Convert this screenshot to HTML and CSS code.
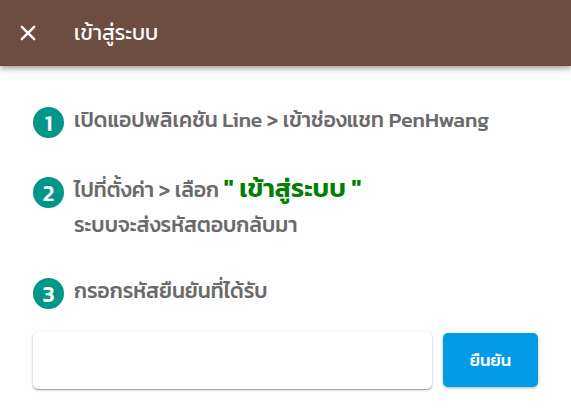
FILE: index.html
```html
<!DOCTYPE html>
<html lang="th">
<head>
<meta charset="utf-8">
<meta name="viewport" content="width=device-width, initial-scale=1">
<title>เข้าสู่ระบบ</title>
<link rel="stylesheet" href="styles.css">
</head>
<body>
<header class="toolbar">
  <button class="close" type="button" aria-label="ปิด">
    <svg viewBox="0 0 24 24" width="24" height="24" fill="none" stroke="currentColor" stroke-width="2.4" stroke-linecap="round"><path d="M5.8 5.8 18.2 18.2M18.2 5.8 5.8 18.2"/></svg>
  </button>
  <h1 class="title">เข้าสู่ระบบ</h1>
</header>
<main class="content">
  <ol class="steps">
    <li class="step"><span class="number">1</span><p class="text">เปิดแอปพลิเคชัน Line &gt; เข้าช่องแชท PenHwang</p></li>
    <li class="step"><span class="number">2</span><p class="text">ไปที่ตั้งค่า &gt; เลือก <strong class="highlight">" เข้าสู่ระบบ "</strong><br>ระบบจะส่งรหัสตอบกลับมา</p></li>
    <li class="step"><span class="number">3</span><label class="text" for="code">กรอกรหัสยืนยันที่ได้รับ</label></li>
  </ol>
  <form class="confirm">
    <input class="code" id="code" type="text">
    <button class="submit" type="button">ยืนยัน</button>
  </form>
</main>
</body>
</html>
```

FILE: styles.css
```css
* {
  box-sizing: border-box;
}

body {
  margin: 0;
  background: #fefefe;
  color: #6a6a6a;
  font-family: Kanit, "Noto Sans Thai", "Noto Sans", "Open Sans", sans-serif;
}

.toolbar {
  display: flex;
  align-items: center;
  gap: 34px;
  height: 66px;
  padding: 0 16px;
  background: #6d4c41;
  color: #fff;
  box-shadow: 0 2px 4px -1px rgba(0, 0, 0, .2), 0 4px 5px rgba(0, 0, 0, .14), 0 1px 10px rgba(0, 0, 0, .12);
}

.close {
  display: flex;
  padding: 0;
  border: 0;
  background: none;
  color: inherit;
}

.title {
  margin: 0;
  font-size: 21px;
  font-weight: 400;
  line-height: 32px;
}

.content {
  padding: 36px 33px;
}

.steps {
  display: grid;
  gap: 31px;
  margin: 0;
  padding: 0;
  list-style: none;
}

.step {
  display: flex;
  gap: 10px;
  min-height: 39px;
}

.number {
  flex: none;
  width: 31px;
  height: 31px;
  margin-top: 5px;
  border-radius: 50%;
  background: #009688;
  color: #fff;
  font-size: 23px;
  font-weight: 500;
  line-height: 32px;
  text-align: center;
}

.text {
  margin: 0;
  font-size: 21px;
  font-weight: 500;
  line-height: 35px;
}

.highlight {
  color: #008000;
  font-size: 26px;
  font-weight: 600;
  line-height: 26px;
}

.confirm {
  display: flex;
  gap: 11px;
  margin-top: 20px;
}

.code {
  flex: 1;
  min-width: 0;
  height: 57px;
  border: 0;
  border-radius: 5px;
  background: #fff;
  box-shadow: 0 1px 3px rgba(0, 0, 0, .2), 0 1px 1px rgba(0, 0, 0, .25);
}

.submit {
  width: 95px;
  height: 54px;
  margin-top: 1px;
  border: 0;
  border-radius: 5px;
  background: #039be5;
  color: #fff;
  font: inherit;
  font-size: 17px;
  font-weight: 500;
  box-shadow: 0 1px 3px rgba(0, 0, 0, .3);
}
```
